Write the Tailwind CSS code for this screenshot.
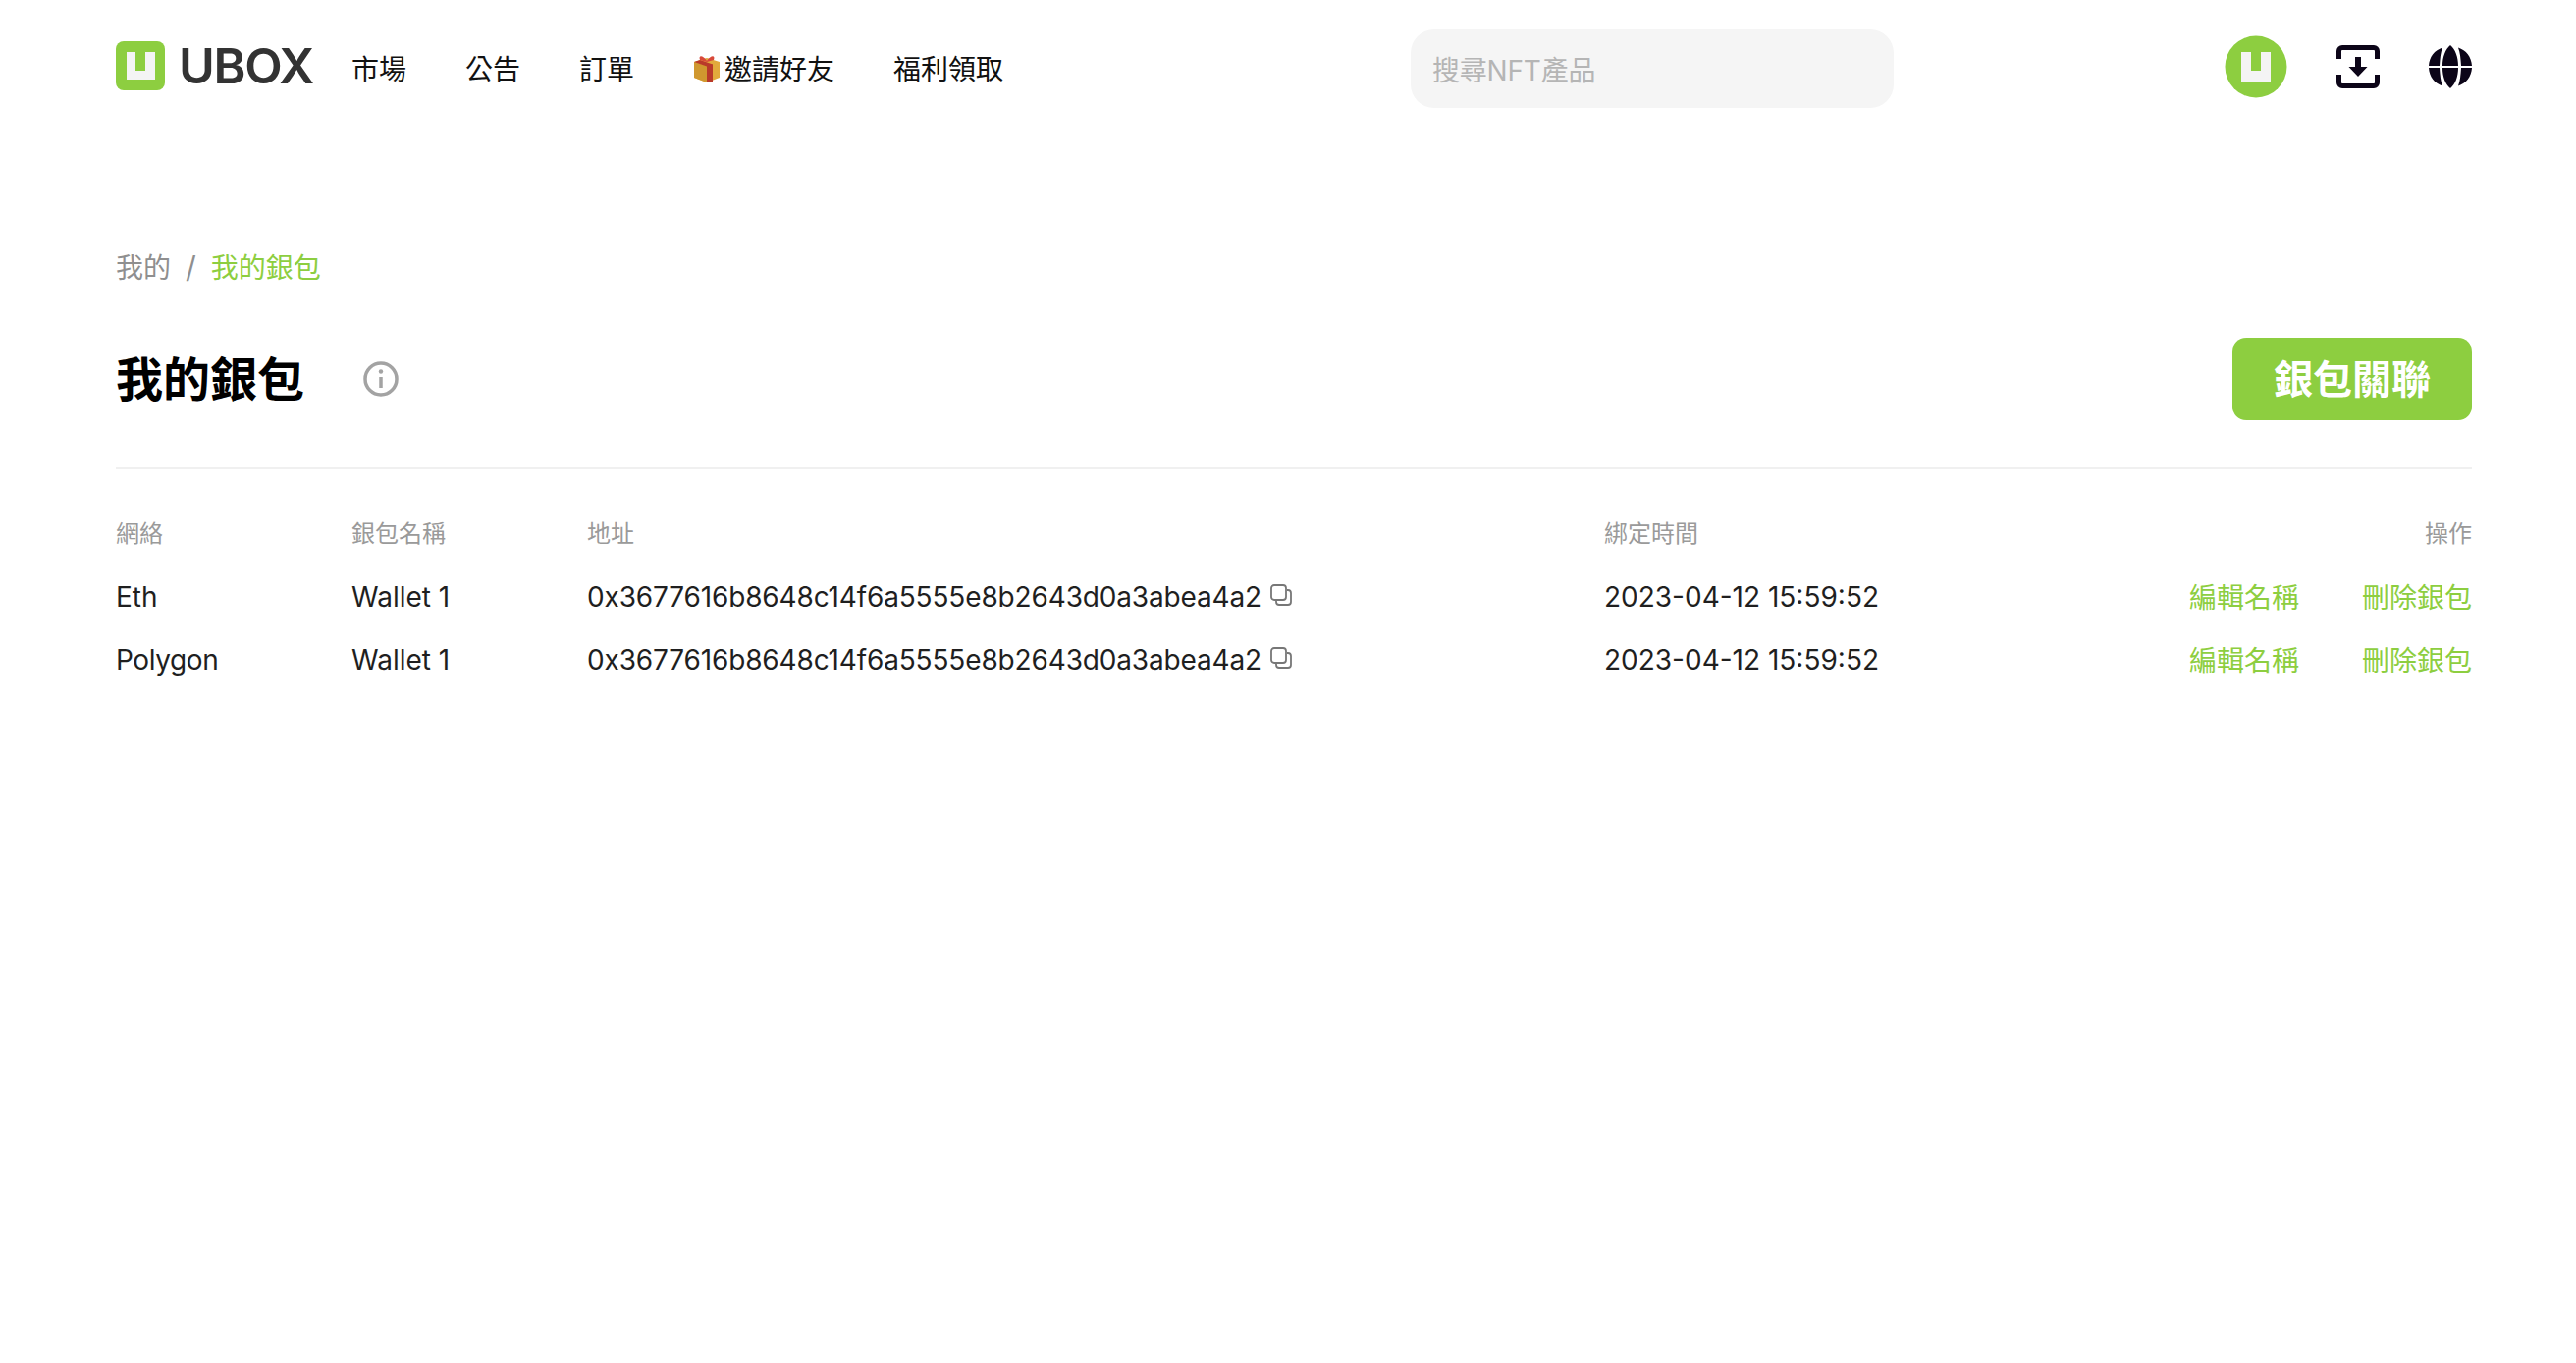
<!DOCTYPE html>
<html lang="zh-Hant">
 <head>
  <meta charset="UTF-8" />
  <script src="https://cdn.jsdelivr.net/npm/@tailwindcss/browser@4"></script>
  <title>UBOX</title>
 </head>
 <body class="bg-white h-screen overflow-hidden font-['Inter','Noto_Sans_CJK_TC',sans-serif] text-[#1f1f1f]">
  <!-- top bar -->
  <header class="h-[134px] pl-[118px] pr-[106px] flex items-center relative">
   <svg class="w-[50px] h-[50px] shrink-0" viewBox="0 0 50 50">
    <rect width="50" height="50" rx="8" fill="#8dce40" />
    <path d="M11 11h9v19h10V11h10v28H11z" fill="#f4f4f4" />
   </svg>
   <span class="ml-[14px] w-[136px] text-[50px] leading-none font-semibold text-[#333] tracking-[-1.2px]">UBOX</span>
   <nav class="ml-10 pt-[7px] flex items-center gap-[60px] text-[28px] text-[#111]">
    <a>市場</a>
    <a>公告</a>
    <a>訂單</a>
    <a class="flex items-center">
     <svg class="w-7 h-7 mr-1 -translate-y-[1px]" viewBox="0 0 28 28">
      <path d="M1 7l13-4 13 4v16l-13 5-13-5z" fill="#e2aa3c" />
      <path d="M1 7l13 4v17l-13-5z" fill="#d0982f" />
      <path d="M7 5l13 4.500V28l-6 0V11.500L1 7z" fill="#b93a2a" />
      <path d="M20 9.500l-6 2V28l6-2z" fill="#b93a2a" />
      <path d="M14 6C10 0 5 0 7 5l7 2 7-2c2-5-3-5-7 1z" fill="#d8493a" />
     </svg>
     邀請好友
    </a>
    <a>福利領取</a>
   </nav>
   <div class="absolute left-[1437px] top-[30px] w-[492px] h-[80px] rounded-[24px] bg-[#f5f5f5] px-[22px] pt-[3px] flex items-center text-[28px] tracking-[-0.2px] text-[#b5b5b5]">搜尋NFT產品</div>
   <div class="ml-auto pt-[2px] flex items-center gap-[50px]">
    <svg class="w-[64px] h-[64px]" viewBox="0 0 64 64">
     <circle cx="32" cy="32" r="31.500" fill="#8dce40" />
     <path d="M17 17h10v19h10V17h10v30H17z" fill="#f4f4f4" />
    </svg>
    <svg class="w-[44px] h-[44px]" viewBox="0 0 44 44" fill="none" stroke="#0c0518" stroke-width="5">
     <path d="M2.500 14V6a3.500 3.500 0 0 1 3.500-3.500h32a3.500 3.500 0 0 1 3.500 3.500v8M2.500 30v8a3.500 3.500 0 0 0 3.500 3.500h32a3.500 3.500 0 0 0 3.500-3.500v-8" />
     <path d="M19 12h6v10h6.500L22 32l-9.500-10H19z" fill="#0c0518" stroke="none" />
    </svg>
    <svg class="w-[44px] h-[44px]" viewBox="0 0 44 44" fill="#0c0518">
     <path d="M22 0c-5 4-8 12-8 21h16C30 12 27 4 22 0zM22 44c-5-4-8-12-8-21h16C30 32 27 40 22 44z" />
     <path d="M14 2.500C6 5 .500 12 0 21h11C11.500 13.500 12 7.500 14 2.500zM30 2.500C38 5 43.500 12 44 21H33C32.500 13.500 32 7.500 30 2.500zM14 41.500C6 39 .500 32 0 23h11C11.500 30.500 12 36.500 14 41.500zM30 41.500C38 39 43.500 32 44 23H33C32.500 30.500 32 36.500 30 41.500z" />
    </svg>
   </div>
  </header>

  <main class="pl-[118px] pr-[106px]">
   <!-- breadcrumb -->
   <div class="mt-[118px] pt-[1px] h-10 flex items-center text-[28px] text-[#8f8f8f]">
    <span>我的</span>
    <span class="mx-[15px] text-[30px]">/</span>
    <span class="text-[#8dce40]">我的銀包</span>
   </div>

   <!-- title -->
   <div class="mt-[52px] h-[84px] flex items-center">
    <h1 class="text-[48px] font-bold text-black translate-y-[1px]">我的銀包</h1>
    <svg class="ml-[60px] w-9 h-9" viewBox="0 0 36 36" fill="none">
     <circle cx="18" cy="18" r="16" stroke="#a3a3a3" stroke-width="3.500" />
     <circle cx="18" cy="10.500" r="2.200" fill="#a3a3a3" />
     <path d="M18 16v11" stroke="#a3a3a3" stroke-width="3.500" />
    </svg>
    <button class="ml-auto w-[244px] h-[84px] pt-[2px] rounded-[14px] bg-[#8dce40] text-white text-[40px] font-bold">銀包關聯</button>
   </div>

   <div class="mt-12 border-t-2 border-[#f0f0f0]"></div>

   <!-- wallet table -->
   <div class="mt-[50px] grid grid-cols-[240px_240px_1036px_1fr_auto] items-center text-[28px]">
    <div class="h-8 flex items-center text-[24px] text-[#9a9a9a]">網絡</div>
    <div class="h-8 flex items-center text-[24px] text-[#9a9a9a]">銀包名稱</div>
    <div class="h-8 flex items-center text-[24px] text-[#9a9a9a]">地址</div>
    <div class="h-8 flex items-center text-[24px] text-[#9a9a9a]">綁定時間</div>
    <div class="h-8 flex items-center justify-end text-[24px] text-[#9a9a9a]">操作</div>

    <div class="h-16 mt-[16px] flex items-center">Eth</div>
    <div class="h-16 mt-[16px] flex items-center">Wallet 1</div>
    <div class="h-16 mt-[16px] flex items-center tracking-[-0.15px]">0x3677616b8648c14f6a5555e8b2643d0a3abea4a2
     <svg class="ml-[9px] mb-1 w-[22px] h-[22px]" viewBox="0 0 22 22" fill="none" stroke="#777" stroke-width="1.800">
      <rect x="1" y="1" width="15" height="15" rx="3" />
      <path d="M17 6h1a3 3 0 0 1 3 3v9a3 3 0 0 1-3 3H9a3 3 0 0 1-3-3v-1" />
     </svg>
    </div>
    <div class="h-16 mt-[16px] flex items-center">2023-04-12 15:59:52</div>
    <div class="h-16 mt-[16px] pt-[2px] flex items-center gap-[64px] text-[#8dce40]"><a>編輯名稱</a><a>刪除銀包</a></div>

    <div class="h-16 flex items-center tracking-[-0.4px]">Polygon</div>
    <div class="h-16 flex items-center">Wallet 1</div>
    <div class="h-16 flex items-center tracking-[-0.15px]">0x3677616b8648c14f6a5555e8b2643d0a3abea4a2
     <svg class="ml-[9px] mb-1 w-[22px] h-[22px]" viewBox="0 0 22 22" fill="none" stroke="#777" stroke-width="1.800">
      <rect x="1" y="1" width="15" height="15" rx="3" />
      <path d="M17 6h1a3 3 0 0 1 3 3v9a3 3 0 0 1-3 3H9a3 3 0 0 1-3-3v-1" />
     </svg>
    </div>
    <div class="h-16 flex items-center">2023-04-12 15:59:52</div>
    <div class="h-16 pt-[2px] flex items-center gap-[64px] text-[#8dce40]"><a>編輯名稱</a><a>刪除銀包</a></div>
   </div>
  </main>
 </body>
</html>
